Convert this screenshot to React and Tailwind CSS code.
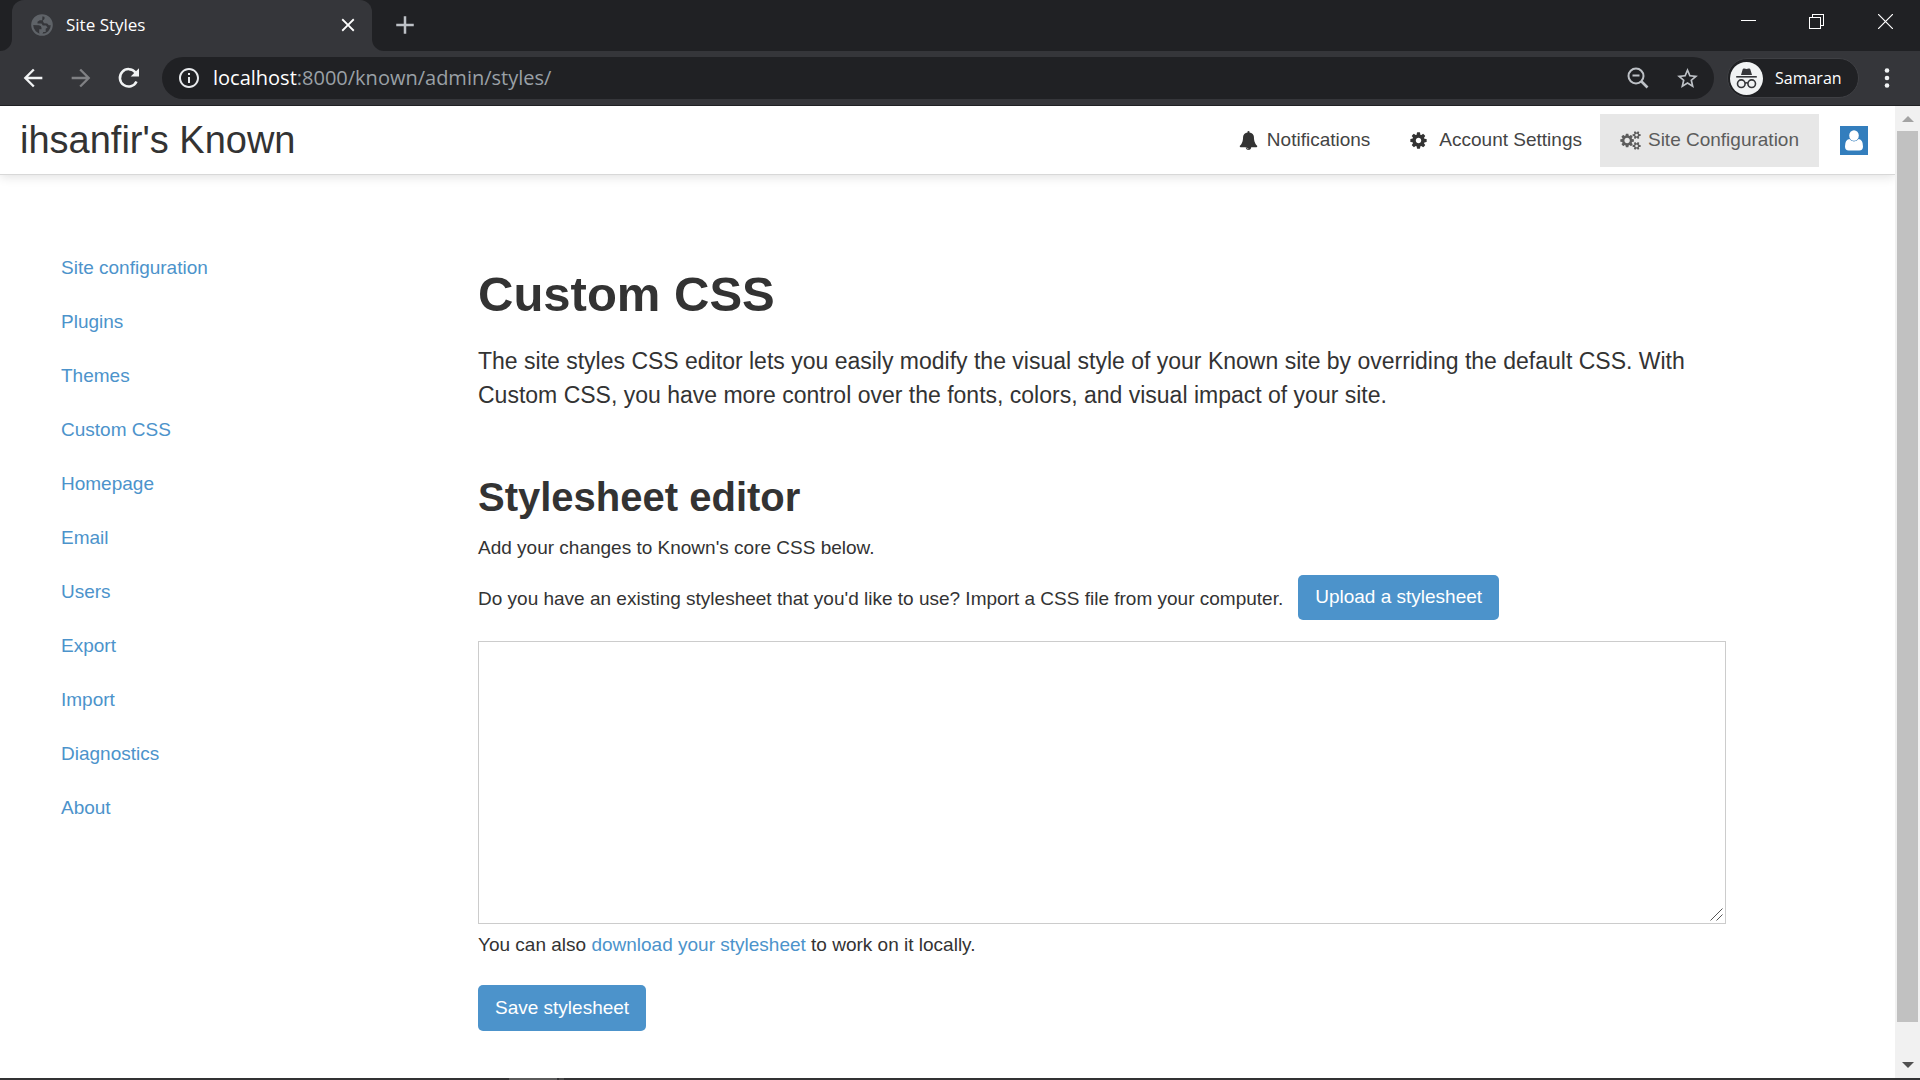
import React from "react";
import { MdArrowBack, MdArrowForward, MdInfoOutline, MdStarBorder, MdClose, MdAdd } from "react-icons/md";

const COG =
  "M1152 896q0-106-75-181t-181-75-181 75-75 181 75 181 181 75 181-75 75-181zm512-109v222q0 12-8 23t-20 13l-185 28q-19 54-39 91 35 50 107 138 10 12 10 25t-9 23q-27 37-99 108t-94 71q-12 0-26-9l-138-108q-44 23-91 38-16 136-29 186-7 28-36 28h-222q-14 0-24.5-8.5t-11.5-21.5l-28-184q-49-16-90-37l-141 107q-10 9-25 9-14 0-25-11-126-114-165-168-7-10-7-23 0-12 8-23 15-21 51-66.5t54-70.5q-27-50-41-99l-183-27q-13-2-21-12.5t-8-23.5v-222q0-12 8-23t19-13l186-28q14-46 39-92-40-57-107-138-10-12-10-24 0-10 9-23 26-36 98.5-107.5t94.5-71.5q13 0 26 10l138 107q44-23 91-38 16-136 29-186 7-28 36-28h222q14 0 24.5 8.5t11.5 21.5l28 184q49 16 90 37l142-107q9-9 24-9 13 0 25 10 129 119 165 170 7 8 7 22 0 12-8 23-15 21-51 66.5t-54 70.5q26 50 41 98l183 28q13 2 21 12.5t8 23.5z";
const COGS =
  "M896 896q0-106-75-181t-181-75-181 75-75 181 75 181 181 75 181-75 75-181zm768 512q0-52-38-90t-90-38-90 38-38 90q0 53 37.5 90.5t90.5 37.5 90.5-37.5 37.5-90.5zm0-1024q0-52-38-90t-90-38-90 38-38 90q0 53 37.5 90.5t90.5 37.5 90.5-37.5 37.5-90.5zm-384 421v185q0 10-7 19.5t-16 10.5l-155 24q-11 35-32 76 34 48 90 115 7 11 7 20 0 12-7 19-23 30-82.5 89.5t-78.5 59.5q-11 0-21-7l-115-90q-37 19-77 31-11 108-23 155-7 24-30 24h-186q-11 0-20-7.5t-10-17.5l-23-153q-34-10-75-31l-118 89q-7 7-20 7-11 0-21-8-144-133-144-160 0-9 7-19 10-14 41-53t47-61q-23-44-35-82l-152-24q-10-1-17-9.5t-7-19.5v-185q0-10 7-19.5t16-10.5l155-24q11-35 32-76-34-48-90-115-7-11-7-20 0-12 7-20 22-30 82-89t79-59q11 0 21 7l115 90q34-18 77-32 11-108 23-154 7-24 30-24h186q11 0 20 7.5t10 17.5l23 153q34 10 75 31l118-89q8-7 20-7 11 0 21 8 144 133 144 160 0 8-7 19-12 16-42 54t-45 60q23 48 34 82l152 23q10 2 17 10.5t7 19.5zm640 533v140q0 16-149 31-12 27-30 52 51 113 51 138 0 4-4 7-122 71-124 71-8 0-46-47t-52-68q-20 2-30 2t-30-2q-14 21-52 68t-46 47q-2 0-124-71-4-3-4-7 0-25 51-138-18-25-30-52-149-15-149-31v-140q0-16 149-31 13-29 30-52-51-113-51-138 0-4 4-7 4-2 35-20t59-34 30-16q8 0 46 46.5t52 67.5q20-2 30-2t30 2q51-71 92-112l6-2q4 0 124 70 4 3 4 7 0 25-51 138 17 23 30 52 149 15 149 31zm0-1024v140q0 16-149 31-12 27-30 52 51 113 51 138 0 4-4 7-122 71-124 71-8 0-46-47t-52-68q-20 2-30 2t-30-2q-14 21-52 68t-46 47q-2 0-124-71-4-3-4-7 0-25 51-138-18-25-30-52-149-15-149-31v-140q0-16 149-31 13-29 30-52-51-113-51-138 0-4 4-7 4-2 35-20t59-34 30-16q8 0 46 46.5t52 67.5q20-2 30-2t30 2q51-71 92-112l6-2q4 0 124 70 4 3 4 7 0 25-51 138 17 23 30 52 149 15 149 31z";
const BELL =
  "M912 1696q0-16-16-16-59 0-101.5-42.5t-42.5-101.5q0-16-16-16t-16 16q0 73 51.5 124.5t124.5 51.5q16 0 16-16zm816-288q0 52-38 90t-90 38h-448q0 106-75 181t-181 75-181-75-75-181h-448q-52 0-90-38t-38-90q50-42 91-88t85-119.5 74.5-158.5 50-206 19.5-260q0-152 117-282.5t307-158.5q-8-19-8-39 0-40 28-68t68-28 68 28 28 68q0 20-8 39 190 28 307 158.5t117 282.5q0 139 19.5 260t50 206 74.5 158.5 85 119.5 91 88z";

const SIDEBAR = ["Site configuration", "Plugins", "Themes", "Custom CSS", "Homepage", "Email", "Users", "Export", "Import", "Diagnostics", "About"];

function TabStrip() {
  return (
    <div className="flex h-[51px] shrink-0 bg-[#202124]">
      <div className="flex w-3 bg-[#35363a]">
        <div className="flex-1 rounded-br-xl bg-[#202124]" />
      </div>
      <div className="flex w-[360px] items-center rounded-t-xl bg-[#35363a] pb-0.5 pl-[19px] pr-[13px]">
        <svg width="22" height="22" viewBox="0 0 22 22" aria-hidden="true">
          <circle cx="11" cy="11" r="9.800" fill="none" stroke="#5f6368" strokeWidth="2" />
          <path d="M11.500 1.500C5.500 1 1 5.500 1 11l6.800.3q2.700.3 2.700 2.500v1.500H8.200v3.500q0 1.500 2.300 1.800 1.500-.2 1.700-2.600h2.500v-3.200l1.800-1.200-1.500-2.200h-3.200l-1.300-1.800H6.500V7.800l2.300-1.500h2.400z" fill="#5f6368" />
          <path d="M13.500 2v3l-1.800 1.800 1.300 2.400 3.200.3 1.600 1.700h3.200Q20.500 4 13.500 2z" fill="#5f6368" />
        </svg>
        <span className="ml-[13px] flex-1 text-[17px] leading-6 text-white">Site Styles</span>
        <button aria-label="Close tab" className="text-white">
          <MdClose className="size-[22px]" />
        </button>
      </div>
      <div className="flex w-3 bg-[#35363a]">
        <div className="flex-1 rounded-bl-xl bg-[#202124]" />
      </div>
      <button aria-label="New tab" className="ml-1.5 pb-0.5 text-[#bdc1c6]">
        <MdAdd className="size-[30px]" />
      </button>
      <div className="ml-auto flex items-start text-white">
        <button aria-label="Minimize" className="grid h-[42px] w-[68px] place-items-center">
          <svg width="15" height="15" viewBox="0 0 15 15" shapeRendering="crispEdges"><path d="M0 6h15v1H0z" fill="currentColor" /></svg>
        </button>
        <button aria-label="Restore" className="grid h-[42px] w-[68px] place-items-center">
          <svg width="15" height="15" viewBox="0 0 15 15" fill="none" stroke="currentColor" shapeRendering="crispEdges"><path d="M.5 3.5h11v11H.5zM3.5 3V.5h11v11H12" /></svg>
        </button>
        <button aria-label="Close" className="grid h-[42px] w-[70px] place-items-center">
          <svg width="15" height="15" viewBox="0 0 15 15" fill="none" stroke="currentColor" strokeWidth="1.200"><path d="M0 0l15 15M15 0L0 15" /></svg>
        </button>
      </div>
    </div>
  );
}

function Toolbar() {
  return (
    <div className="flex h-[55px] shrink-0 items-center border-b border-[#202124] bg-[#35363a] pl-[19px] pr-[30px]">
      <button aria-label="Back" className="text-[#f1f3f4]"><MdArrowBack className="size-7" /></button>
      <button aria-label="Forward" className="ml-5 text-[#808184]"><MdArrowForward className="size-7" /></button>
      <button aria-label="Reload" className="ml-[22px] text-[#f1f3f4]">
        <svg width="24" height="24" viewBox="0 0 24 24">
          <path d="M19.500 15.500A8.700 8.700 0 1 1 18.500 6.500" fill="none" stroke="currentColor" strokeWidth="2.500" />
          <path d="M22 2.200v8.300h-8.300z" fill="currentColor" />
        </svg>
      </button>
      <div className="ml-[21px] flex h-[42px] flex-1 items-center rounded-full bg-[#202124] pl-[15px] pr-[14px]">
        <MdInfoOutline className="size-6 text-[#e8eaed]" aria-hidden="true" />
        <a href="#url" className="ml-3 flex-1 text-[20px] text-[#9aa0a6]">
          <span className="text-white">localhost</span>:8000/known/admin/styles/
        </a>
        <button aria-label="Zoom" className="text-[#bdc1c6]">
          <svg width="22" height="22" viewBox="0 0 22 22" fill="none" stroke="currentColor" strokeWidth="2"><circle cx="9" cy="9" r="7.500" /><path d="M14.500 14.500l6 6" strokeWidth="2.600" /><path d="M5.500 8.500h7" /></svg>
        </button>
        <button aria-label="Bookmark this page" className="ml-[26px] text-[#bdc1c6]"><MdStarBorder className="size-[25px]" /></button>
      </div>
      <button className="ml-[13px] flex h-10 w-[132px] items-center rounded-full border border-[#3f4044] bg-[#202124] pl-0.5">
        <svg width="33" height="33" viewBox="0 0 33 33" aria-hidden="true">
          <circle cx="16.500" cy="16.500" r="16.500" fill="#f1f3f4" />
          <path d="M11 13l1.700-5.700q.4-1.200 1.500-.8l2.300.6 2.300-.6q1.100-.4 1.500.8L22 13z" fill="#35363a" />
          <path d="M6.200 14h20.600v1.600H6.200z" fill="#35363a" />
          <g fill="none" stroke="#35363a" strokeWidth="1.600"><circle cx="11.300" cy="21.700" r="3.800" /><circle cx="21.700" cy="21.700" r="3.800" /><path d="M15 21.300q1.500-1 3 0" /></g>
        </svg>
        <span className="ml-3 text-[16px] text-white">Samaran</span>
      </button>
      <button aria-label="Menu" className="ml-[25px] text-[#f1f3f4]">
        <svg width="6" height="20" viewBox="0 0 6 20" fill="currentColor"><circle cx="3" cy="2.500" r="2.300" /><circle cx="3" cy="10" r="2.300" /><circle cx="3" cy="17.500" r="2.300" /></svg>
      </button>
    </div>
  );
}

function Header() {
  return (
    <header className="flex h-[69px] shrink-0 items-center border-b border-[#d8d8d8] pl-5 pr-[27px] shadow-[0_2px_10px_rgba(0,0,0,0.12)]">
      <a href="#home" className="text-[38px] leading-[40px]">ihsanfir&#39;s Known</a>
      <nav className="ml-auto flex h-[53px] items-center text-[19px]">
        <a href="#notifications" className="flex h-full items-center px-5 text-[#444]">
          <svg className="mr-[9px] size-[19px] text-[#333]" viewBox="0 0 1792 1792" fill="currentColor"><path d={BELL} /></svg>
          Notifications
        </a>
        <a href="#account" className="flex h-full items-center pl-[19px] pr-[18px] text-[#444]">
          <svg className="mr-[11px] size-[19px] text-[#333]" viewBox="0 0 1792 1792" fill="currentColor"><path d={COG} /></svg>
          Account Settings
        </a>
        <a href="#config" className="flex h-full items-center bg-[#e7e7e7] px-5 text-[#5c5c5c]">
          <svg className="mr-[7px] h-[19px] w-[21px]" viewBox="0 0 1920 1792" fill="currentColor"><path d={COGS} /></svg>
          Site Configuration
        </a>
        <a href="#profile" aria-label="Profile" className="ml-[21px] grid h-[29px] w-7 place-items-center bg-[#337ebd]">
          <svg width="18" height="21" viewBox="0 0 18 21" fill="#fff"><ellipse cx="9" cy="5.500" rx="4.800" ry="5.300" /><path d="M4.300 9q2 2.400 4.700 2.400T13.700 9Q18 9.600 18 16.500q0 4-3.800 4H3.800Q0 20.500 0 16.500 0 9.600 4.300 9z" /></svg>
        </a>
      </nav>
    </header>
  );
}

function Main() {
  return (
    <main className="flex flex-1">
      <nav className="w-[418px] shrink-0 pl-[61px] pt-[66px]">
        <ul className="text-[19px]">
          {SIDEBAR.map((label) => (
            <li key={label} className="flex h-[54px] items-center">
              <a href={"#" + label.toLowerCase().replace(" ", "-")} className="text-[#4c93cb]">{label}</a>
            </li>
          ))}
        </ul>
      </nav>
      <section className="ml-[60px] mr-[169px] min-w-0 flex-1 pt-[92px]">
        <h1 className="text-[49px] font-bold leading-[54px]">Custom CSS</h1>
        <p className="mt-[23px] text-[23px] leading-[34px]">
          The site styles CSS editor lets you easily modify the visual style of your Known site by overriding the default CSS. With Custom CSS, you have more control over the fonts, colors, and visual impact of your site.
        </p>
        <h2 className="mt-[63px] text-[40px] font-bold leading-[44px]">Stylesheet editor</h2>
        <p className="mt-[15px] text-[19px] leading-[27px]">Add your changes to Known&#39;s core CSS below.</p>
        <div className="mt-[14px] flex items-center gap-[15px] text-[19px]">
          <label htmlFor="css" className="pt-0.5 leading-[27px]">Do you have an existing stylesheet that you&#39;d like to use? Import a CSS file from your computer.</label>
          <button className="h-[45px] rounded-[5px] bg-[#4c93cb] px-[17px] text-white">Upload a stylesheet</button>
        </div>
        <div className="relative mt-[21px]">
          <textarea id="css" className="block h-[283px] w-full resize-none border border-[#ccc] bg-white p-2 outline-none" />
          <svg className="pointer-events-none absolute bottom-[3px] right-[3px]" width="13" height="13" viewBox="0 0 13 13" fill="none" stroke="#555" aria-hidden="true"><path d="M.5 12.500l12-12M6.500 12.500l6-6" /></svg>
        </div>
        <p className="mt-[7px] text-[19px] leading-[27px]">
          You can also <a href="#download" className="text-[#4c93cb]">download your stylesheet</a> to work on it locally.
        </p>
        <button className="mt-[27px] h-[46px] rounded-[5px] bg-[#4c93cb] px-[17px] text-[19px] text-white">Save stylesheet</button>
      </section>
    </main>
  );
}

function Scrollbar() {
  return (
    <div className="flex w-[25px] shrink-0 flex-col items-center bg-[#f1f1f1]">
      <div className="grid h-[25px] place-items-center">
        <svg width="12" height="6" viewBox="0 0 12 6"><path d="M0 6L6 0l6 6z" fill="#a3a3a3" /></svg>
      </div>
      <div className="w-[21px] flex-1 bg-[#c1c1c1]" />
      <div className="flex h-[56px] items-end pb-[10px]">
        <svg width="12" height="6" viewBox="0 0 12 6"><path d="M0 0l6 6 6-6z" fill="#505050" /></svg>
      </div>
    </div>
  );
}

export default function App() {
  return (
    <div className="flex h-screen flex-col overflow-hidden bg-white font-['Open_Sans',sans-serif]">
      <TabStrip />
      <Toolbar />
      <div className="flex min-h-0 flex-1">
        <div className="flex min-w-0 flex-1 flex-col overflow-hidden font-['Liberation_Sans',Arial,sans-serif] text-[#333]">
          <Header />
          <Main />
        </div>
        <Scrollbar />
      </div>
      <div className="flex h-0.5 shrink-0 bg-[#323234] pl-[509px]">
        <div className="w-12 bg-[#5a5a5a]" />
        <div className="ml-0.5 w-[5px] bg-[#4a4a4a]" />
      </div>
    </div>
  );
}
